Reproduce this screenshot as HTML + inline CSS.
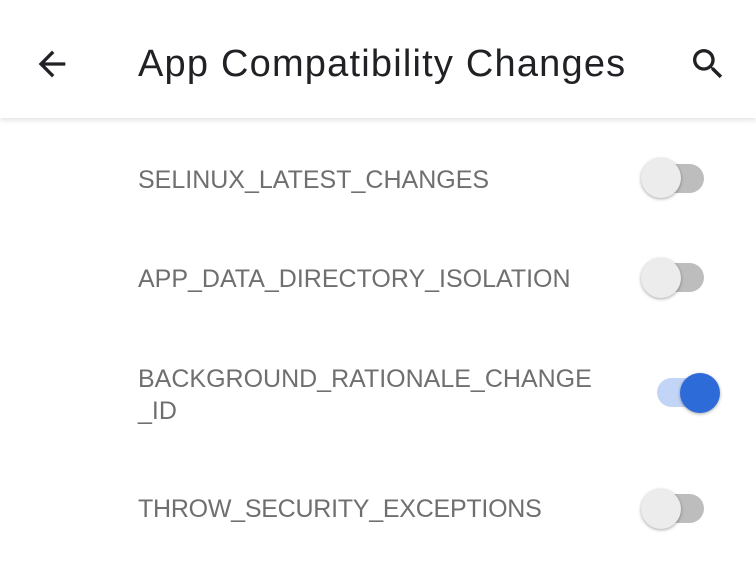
<!DOCTYPE html>
<html><head><style>
body{margin:0;width:756px;height:572px;background:#fff;position:relative;overflow:hidden;font-family:"Liberation Sans",sans-serif}
.bar{position:absolute;left:0;top:0;width:756px;height:118px;background:#fff;box-shadow:0 2px 5px rgba(0,0,0,0.12)}
.title{position:absolute;left:138px;top:43px;font-size:38px;color:#202124;white-space:nowrap;letter-spacing:1.2px}
.t{position:absolute;left:138px;font-size:25px;color:#6f6f6f;line-height:32px;white-space:nowrap}
.track{position:absolute;width:56px;height:29px;border-radius:15px;background:#bdbdbd}
.thumb{position:absolute;width:40px;height:40px;border-radius:50%;background:#ececec;box-shadow:0 1px 3px rgba(0,0,0,0.35)}
</style></head><body>
<div class="bar">
<svg style="position:absolute;left:32px;top:44px" width="40" height="40" viewBox="0 0 24 24"><path d="M20 11H7.83l5.59-5.59L12 4l-8 8 8 8 1.41-1.41L7.83 13H20v-2z" fill="#202124"/></svg>
<div class="title">App Compatibility Changes</div>
<svg style="position:absolute;left:688px;top:44px" width="40" height="40" viewBox="0 0 24 24"><path d="M15.5 14h-.79l-.28-.27A6.47 6.47 0 0 0 16 9.5 6.5 6.5 0 1 0 9.5 16c1.61 0 3.090-.59 4.23-1.57l.27.28v.79l5 4.99L20.49 19l-4.99-5zm-6 0C7.01 14 5 11.990 5 9.5S7.01 5 9.5 5 14 7.01 14 9.5 11.99 14 9.5 14z" fill="#202124"/></svg>
</div>
<div class="t" style="top:164px">SELINUX_LATEST_CHANGES</div>
<div class="t" style="top:263px">APP_DATA_DIRECTORY_ISOLATION</div>
<div class="t" style="top:363px">BACKGROUND_RATIONALE_CHANGE<br>_ID</div>
<div class="t" style="top:493px;letter-spacing:-0.25px">THROW_SECURITY_EXCEPTIONS</div>
<div class="track" style="left:648px;top:164px"></div><div class="thumb" style="left:641px;top:158px"></div>
<div class="track" style="left:648px;top:263px"></div><div class="thumb" style="left:641px;top:258px"></div>
<div class="track" style="left:657px;top:378px;width:50px;background:#c3d5f6"></div><div class="thumb" style="left:680px;top:373px;background:#2d6bd9"></div>
<div class="track" style="left:648px;top:494px"></div><div class="thumb" style="left:641px;top:489px"></div>
</body></html>
